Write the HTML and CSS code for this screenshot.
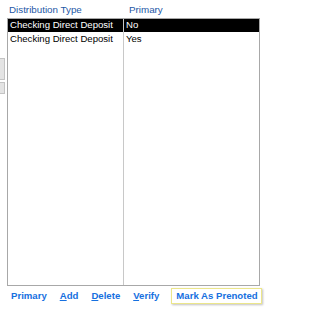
FILE: index.html
```html
<!DOCTYPE html>
<html>
<head>
<meta charset="utf-8">
<link rel="stylesheet" href="styles.css">
</head>
<body>
<div class="panel">
  <div class="head">
    <div class="h1">Distribution Type</div>
    <div class="h2">Primary</div>
  </div>
  <div class="box">
    <div class="col c1">
      <div class="cell sel">Checking Direct Deposit</div>
      <div class="cell">Checking Direct Deposit</div>
    </div>
    <div class="col c2">
      <div class="cell sel">No</div>
      <div class="cell">Yes</div>
    </div>
  </div>
  <div class="actions">
    <span class="btn">Primary</span>
    <span class="btn"><u>A</u>dd</span>
    <span class="btn"><u>D</u>elete</span>
    <span class="btn"><u>V</u>erify</span>
    <span class="btn focus">Mark As Prenoted</span>
  </div>
  <div class="scrollfrag"><div class="seg"></div><div class="seg"></div></div>
</div>
</body>
</html>
```
FILE: styles.css
```css
html, body {
  margin: 0;
  padding: 0;
  background: #ffffff;
}
body {
  font-family: "Liberation Sans", Arial, sans-serif;
  font-size: 9.6px;
  color: #000;
  width: 277px;
  height: 317px;
  overflow: hidden;
}
.panel {
  position: relative;
  width: 277px;
  height: 317px;
}
.head {
  display: flex;
  padding: 4px 0 0 9px;
  height: 14px;
  line-height: 11px;
  color: #2458a6;
  font-size: 9.8px;
}
.h1 { width: 120px; }
.h2 { }
.box {
  margin-left: 7px;
  width: 251px;
  height: 266px;
  border: 1px solid #a8a8a8;
  display: flex;
}
.col { display: flex; flex-direction: column; }
.c1 { width: 115px; }
.c2 { flex: 1; border-left: 1px solid #c8c8c8; }
.cell {
  height: 12.5px;
  line-height: 12.5px;
  padding-left: 2px;
  white-space: nowrap;
}
.cell + .cell {
  height: 13px;
  line-height: 13px;
}
.sel {
  background: #000;
  color: #fff;
}
.actions {
  display: flex;
  align-items: center;
  padding: 2px 0 0 11px;
  gap: 13px;
}
.btn {
  font-weight: bold;
  color: #1670e0;
  font-size: 9.6px;
  line-height: 12px;
}
.btn u { text-decoration: underline; }
.focus {
  margin-left: -1px;
  padding: 1px 3px 1px 4px;
  border: 1px solid #ece68a;
  box-shadow: 1px 1px 2px rgba(0,0,0,0.25);
  background: #fff;
}
.scrollfrag {
  position: absolute;
  left: 0;
  top: 58px;
  width: 5px;
  display: flex;
  flex-direction: column;
  gap: 2px;
}
.seg {
  background: #e4e4e4;
  border: 1px solid #c4c4c4;
  border-left: none;
}
.seg:first-child { height: 20px; }
.seg:last-child { height: 10px; }
```
